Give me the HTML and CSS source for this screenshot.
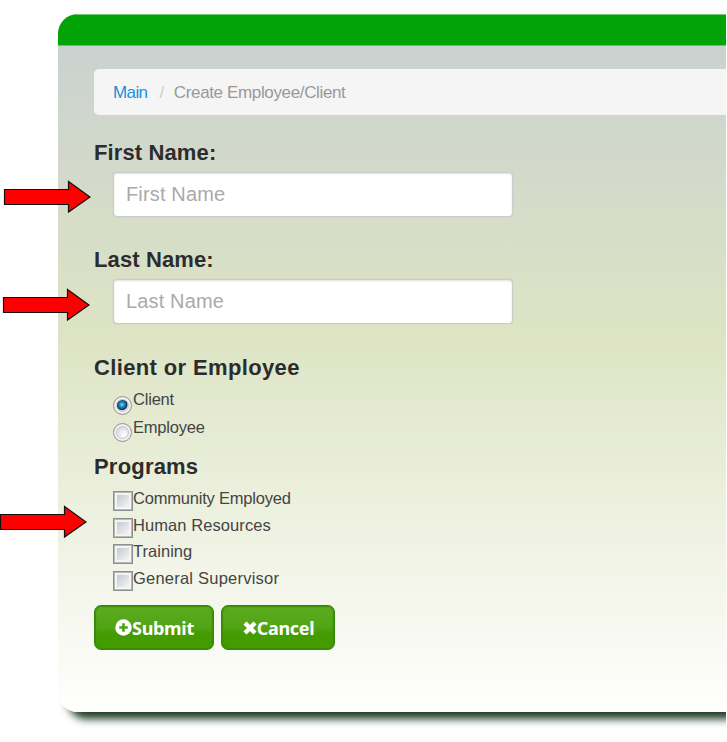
FILE: index.html
```html
<!DOCTYPE html>
<html lang="en">
<head>
<meta charset="utf-8">
<title>Create Employee/Client</title>
<link rel="stylesheet" href="styles.css">
</head>
<body>
<div class="viewport">
  <main class="card">
    <header class="topbar"></header>
    <div class="content">
      <nav class="breadcrumb"><a class="home" href="#">Main</a><span class="slash">/</span><span class="current">Create Employee/Client</span></nav>
      <form>
        <label class="heading first" for="fn">First Name:</label>
        <input class="field" id="fn" type="text" placeholder="First Name">
        <label class="heading last" for="ln">Last Name:</label>
        <input class="field" id="ln" type="text" placeholder="Last Name">
        <h2 class="heading kind">Client or Employee</h2>
        <div class="choices radios">
          <label class="choice"><input class="radio" type="radio" name="kind" checked><span>Client</span></label>
          <label class="choice"><input class="radio" type="radio" name="kind"><span>Employee</span></label>
        </div>
        <h2 class="heading programs">Programs</h2>
        <div class="choices checks">
          <label class="choice"><input class="check" type="checkbox"><span>Community Employed</span></label>
          <label class="choice human"><input class="check" type="checkbox"><span>Human Resources</span></label>
          <label class="choice training"><input class="check" type="checkbox"><span>Training</span></label>
          <label class="choice general"><input class="check" type="checkbox"><span>General Supervisor</span></label>
        </div>
        <div class="actions">
          <button class="btn submit" type="button"><svg width="17" height="17" viewBox="0 0 17 17"><circle cx="8.5" cy="8.5" r="8.2" fill="#fff"/><path d="M8.5 4.2v8.6M4.2 8.5h8.6" stroke="#4ba30f" stroke-width="2.6"/></svg><span>Submit</span></button>
          <button class="btn cancel" type="button"><svg width="14" height="14" viewBox="0 0 14 14"><path d="M2 2l10 10M12 2L2 12" stroke="#fff" stroke-width="4.4"/></svg><span>Cancel</span></button>
        </div>
      </form>
    </div>
  </main>
</div>
<svg class="arrow a1" width="88" height="34" viewBox="0 0 88 34"><path d="M1.5 9.500h64V1.500L87 17 65.500 32V24.500h-64z"/></svg>
<svg class="arrow a2" width="88" height="34" viewBox="0 0 88 34"><path d="M1.5 9.500h64V1.500L87 17 65.500 32V24.500h-64z"/></svg>
<svg class="arrow a3" width="88" height="34" viewBox="0 0 88 34"><path d="M1.5 9.500h64V1.500L87 17 65.500 32V24.500h-64z"/></svg>
</body>
</html>
```
FILE: styles.css
```css
* { box-sizing: border-box; }
html, body { margin: 0; height: 742px; overflow: hidden; background: #fff; }
body { position: relative; font-family: "Liberation Sans", Arial, sans-serif; color: #333; }
.viewport { width: 725.500px; height: 742px; padding: 14px 0 0 58px; overflow: hidden; }
.card {
  width: 760px; height: 698px; border-radius: 20px; overflow: hidden;
  background: linear-gradient(#cbd1cf 32px, #d0d7cc 115px, #dde4c4 320px, #fefefc 690px);
  box-shadow: 8px 9px 8px -2px #1e3a22;
}
.topbar { height: 32px; background: #02a306; border-top: 1px solid #70cb73; border-bottom: 1px solid #6cbd70; }
.content { padding: 23px 0 0 36px; }
.breadcrumb {
  display: flex; align-items: center; height: 46px; padding: 2px 0 0 19px; border-radius: 5px;
  background: #f5f5f5; font-size: 17px; letter-spacing: -.36px; white-space: nowrap;
}
.home { color: #1c91d8; text-decoration: none; letter-spacing: -.6px; }
.slash { margin: 0 10px 0 12px; color: #ccc; }
.current { color: #999; }
.heading { display: block; margin: 0; font-size: 22px; line-height: 26px; font-weight: 700; color: #2c2c2c; letter-spacing: .12px; }
.first { margin-top: 25px; }
.last { margin-top: 30px; }
.kind { margin-top: 31px; letter-spacing: .36px; }
.programs { margin-top: 10px; letter-spacing: .2px; }
.field {
  display: block; width: 400px; height: 45px; margin: 6px 0 0 19px; padding: 0 13px 1px 12px;
  border: 1px solid #ccc; border-radius: 4px; outline: 0; background: #fff;
  box-shadow: inset 0 1px 2px rgba(0,0,0,.12), 0 0 1px #bbb; font: 20px "Liberation Sans", Arial, sans-serif;
}
.field::placeholder { color: #aaa; opacity: 1; letter-spacing: .15px; }
.choices { padding-left: 19px; display: flex; flex-direction: column; }
.choice { display: flex; align-items: flex-start; height: 26.700px; font-size: 16.500px; line-height: 20px; letter-spacing: -.2px; color: #444; }
.human { letter-spacing: .08px; }
.training { letter-spacing: .03px; }
.general { letter-spacing: .22px; }
.radios { margin-top: 8px; }
.radios .choice { height: 27.500px; }
.checks { margin-top: 8px; }
.radio, .check { appearance: none; flex: none; margin: 0; }
.radio {
  width: 19px; height: 19px; margin: 7px 1px 0 0; border: 1px solid #969696; border-radius: 50%;
  background: radial-gradient(circle at 60% 65%, #fff, #d4d5dc 65%); box-shadow: inset 0 0 0 2px #f2f2f2, inset 0 0 0 3px #c4c6cc;
}
.radio:checked { background: radial-gradient(circle at 47% 45%, #8fdcf8 0, #2997cf 2px, #105e91 4px, #142f43 5px, #e3e4e8 6px); }
.radios .choice + .choice .radio { margin-top: 6px; }
.check {
  width: 20px; height: 20px; margin-top: 3px; border: 1px solid #8d8f8f;
  background: linear-gradient(135deg, #c4c9d2, #f5f5f5) 3px 3px / 12px 12px no-repeat #f4f4f4;
  box-shadow: inset 0 0 0 1px #b8baba, inset 0 0 0 2px #f4f4f4;
}
.actions { display: flex; gap: 7px; margin-top: 10.500px; }
.btn {
  display: flex; align-items: center; justify-content: center; height: 45px; padding: 0 0 0 1px; border: 1px solid #33870a;
  border-radius: 7px; background: linear-gradient(#5bab1e, #52a417 50%, #459b00 65%, #439b00);
  box-shadow: inset 0 0 1px 1px #3a8d08; color: #fff; font: 700 18px "Noto Sans", "Open Sans", sans-serif; letter-spacing: -.3px;
}
.submit { width: 120px; }
.cancel { width: 114px; }
.arrow { position: absolute; fill: #f00; stroke: #111; stroke-width: 1.200; }
.a1 { left: 3px; top: 180px; }
.a2 { left: 2px; top: 288px; }
.a3 { left: -1px; top: 505px; }
```
